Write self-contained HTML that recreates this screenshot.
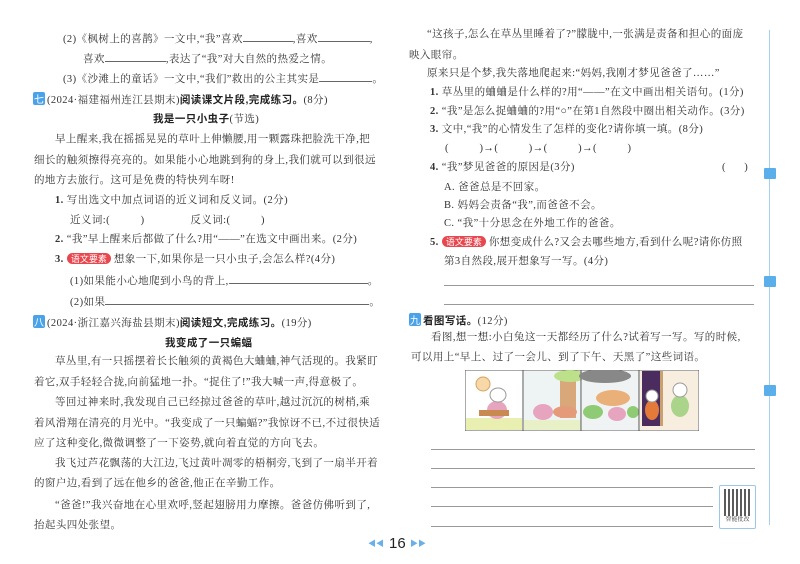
<!DOCTYPE html><html><head><meta charset="utf-8"><style>
body{margin:0;width:800px;height:564px;background:#fff;position:relative;overflow:hidden;font-family:"Liberation Serif","Noto Serif CJK SC",serif;color:#333;}
.l{position:absolute;font-size:10.5px;line-height:14px;white-space:nowrap;letter-spacing:0.43px}
.b{font-family:"Liberation Sans","Noto Sans CJK SC",sans-serif;font-weight:bold;color:#222}
.u{display:inline-block;border-bottom:1px solid #666;height:10px;vertical-align:baseline}
.bd{display:inline-block;width:12px;height:13px;background:#4aa3e8;color:#fff;text-align:center;font-size:10px;line-height:13px;border-radius:2px;margin-right:2px;font-family:"Noto Sans CJK SC",sans-serif;letter-spacing:0}
.rd{display:inline-block;background:#e8474f;color:#fff;font-size:9px;line-height:11px;padding:0 4px;border-radius:6px;margin-right:3px;font-family:"Noto Sans CJK SC",sans-serif;letter-spacing:0}
.hl{position:absolute;height:1px;background:#999}
</style></head><body>
<div class="l" style="top:31px;left:63px">(2)《枫树上的喜鹊》一文中,“我”喜欢<span class="u" style="width:50px"></span>,喜欢<span class="u" style="width:52px"></span>,</div>
<div class="l" style="top:51px;left:83px">喜欢<span class="u" style="width:61px"></span>,表达了“我”对大自然的热爱之情。</div>
<div class="l" style="top:71px;left:63px">(3)《沙滩上的童话》一文中,“我们”救出的公主其实是<span class="u" style="width:53px"></span>。</div>
<div class="l" style="top:92px;left:33px"><span class="bd">七</span>(2024·福建福州连江县期末)<span class="b">阅读课文片段,完成练习。</span>(8分)</div>
<div class="l" style="top:112px;left:153px"><span class="b">我是一只小虫子</span>(节选)</div>
<div class="l" style="top:133px;left:55px">早上醒来,我在摇摇晃晃的草叶上伸懒腰,用一颗露珠把脸洗干净,把</div>
<div class="l" style="top:154px;left:34px">细长的触须擦得亮亮的。如果能小心地跳到狗的身上,我们就可以到很远</div>
<div class="l" style="top:174px;left:34px">的地方去旅行。这可是免费的特快列车呀!</div>
<div class="l" style="top:194px;left:55px"><b>1.</b> 写出选文中加点词语的近义词和反义词。(2分)</div>
<div class="l" style="top:214px;left:70px">近义词:(&nbsp;&nbsp;&nbsp;&nbsp;&nbsp;&nbsp;&nbsp;&nbsp;&nbsp;&nbsp;)&nbsp;&nbsp;&nbsp;&nbsp;&nbsp;&nbsp;&nbsp;&nbsp;&nbsp;&nbsp;&nbsp;&nbsp;&nbsp;&nbsp;&nbsp;反义词:(&nbsp;&nbsp;&nbsp;&nbsp;&nbsp;&nbsp;&nbsp;&nbsp;&nbsp;&nbsp;)</div>
<div class="l" style="top:233px;left:55px"><b>2.</b> “我”早上醒来后都做了什么?用“——”在选文中画出来。(2分)</div>
<div class="l" style="top:253px;left:55px"><b>3.</b> <span class="rd">语文要素</span>想象一下,如果你是一只小虫子,会怎么样?(4分)</div>
<div class="l" style="top:273px;left:70px">(1)如果能小心地爬到小鸟的背上,<span class="u" style="width:139px"></span>。</div>
<div class="l" style="top:294px;left:70px">(2)如果<span class="u" style="width:264px"></span>。</div>
<div class="l" style="top:315px;left:33px"><span class="bd">八</span>(2024·浙江嘉兴海盐县期末)<span class="b">阅读短文,完成练习。</span>(19分)</div>
<div class="l" style="top:336px;left:165px"><span class="b">我变成了一只蝙蝠</span></div>
<div class="l" style="top:355px;left:55px">草丛里,有一只摇摆着长长触须的黄褐色大蛐蛐,神气活现的。我紧盯</div>
<div class="l" style="top:376px;left:34px">着它,双手轻轻合拢,向前猛地一扑。“捉住了!”我大喊一声,得意极了。</div>
<div class="l" style="top:396px;left:55px">等回过神来时,我发现自己已经掠过爸爸的草叶,越过沉沉的树梢,乘</div>
<div class="l" style="top:417px;left:34px">着风滑翔在清亮的月光中。“我变成了一只蝙蝠?”我惊讶不已,不过很快适</div>
<div class="l" style="top:437px;left:34px">应了这种变化,微微调整了一下姿势,就向着直觉的方向飞去。</div>
<div class="l" style="top:457px;left:55px">我飞过芦花飘荡的大江边,飞过黄叶凋零的梧桐旁,飞到了一扇半开着</div>
<div class="l" style="top:477px;left:34px">的窗户边,看到了远在他乡的爸爸,他正在辛勤工作。</div>
<div class="l" style="top:499px;left:55px">“爸爸!”我兴奋地在心里欢呼,竖起翅膀用力摩擦。爸爸仿佛听到了,</div>
<div class="l" style="top:519px;left:34px">抬起头四处张望。</div>

<div class="l" style="top:28px;left:427px">“这孩子,怎么在草丛里睡着了?”朦胧中,一张满是责备和担心的面庞</div>
<div class="l" style="top:49px;left:409px">映入眼帘。</div>
<div class="l" style="top:67px;left:427px">原来只是个梦,我失落地爬起来:“妈妈,我刚才梦见爸爸了……”</div>
<div class="l" style="top:86px;left:430px"><b>1.</b> 草丛里的蛐蛐是什么样的?用“——”在文中画出相关语句。(1分)</div>
<div class="l" style="top:105px;left:430px"><b>2.</b> “我”是怎么捉蛐蛐的?用“○”在第1自然段中圈出相关动作。(3分)</div>
<div class="l" style="top:123px;left:430px"><b>3.</b> 文中,“我”的心情发生了怎样的变化?请你填一填。(8分)</div>
<div class="l" style="top:142px;left:445px">(&nbsp;&nbsp;&nbsp;&nbsp;&nbsp;&nbsp;&nbsp;&nbsp;&nbsp;&nbsp;)→(&nbsp;&nbsp;&nbsp;&nbsp;&nbsp;&nbsp;&nbsp;&nbsp;&nbsp;&nbsp;)→(&nbsp;&nbsp;&nbsp;&nbsp;&nbsp;&nbsp;&nbsp;&nbsp;&nbsp;&nbsp;)→(&nbsp;&nbsp;&nbsp;&nbsp;&nbsp;&nbsp;&nbsp;&nbsp;&nbsp;&nbsp;)</div>
<div class="l" style="top:161px;left:430px"><b>4.</b> “我”梦见爸爸的原因是(3分)</div>
<div class="l" style="top:161px;left:722px">(&nbsp;&nbsp;&nbsp;&nbsp;&nbsp;&nbsp;)</div>
<div class="l" style="top:181px;left:444px">A. 爸爸总是不回家。</div>
<div class="l" style="top:199px;left:444px">B. 妈妈会责备“我”,而爸爸不会。</div>
<div class="l" style="top:217px;left:444px">C. “我”十分思念在外地工作的爸爸。</div>
<div class="l" style="top:236px;left:430px"><b>5.</b> <span class="rd">语文要素</span>你想变成什么?又会去哪些地方,看到什么呢?请你仿照</div>
<div class="l" style="top:255px;left:444px">第3自然段,展开想象写一写。(4分)</div>
<div class="hl" style="top:285px;left:444px;width:310px"></div>
<div class="hl" style="top:304px;left:444px;width:310px"></div>
<div class="l" style="top:313px;left:409px"><span class="bd">九</span><span class="b">看图写话。</span>(12分)</div>
<div class="l" style="top:331px;left:431px">看图,想一想:小白兔这一天都经历了什么?试着写一写。写的时候,</div>
<div class="l" style="top:351px;left:411px">可以用上“早上、过了一会儿、到了下午、天黑了”这些词语。</div>

<svg style="position:absolute;left:465px;top:370px" width="234" height="61" viewBox="0 0 234 61">
<rect x="0" y="0" width="234" height="61" fill="#fff" stroke="#555"/>
<rect x="1" y="48" width="56" height="12" fill="#e8efb0"/>
<circle cx="18" cy="14" r="7" fill="#f7d8a8" stroke="#d9a060"/>
<ellipse cx="32" cy="40" rx="10" ry="9" fill="#e7a4bf"/>
<ellipse cx="33" cy="25" rx="8" ry="7" fill="#fff" stroke="#999"/>
<rect x="14" y="40" width="30" height="6" fill="#c88a50"/>
<line x1="58" y1="0" x2="58" y2="61" stroke="#555"/>
<rect x="59" y="1" width="57" height="59" fill="#eef3f3"/>
<rect x="95" y="8" width="16" height="40" fill="#d9a87a"/>
<ellipse cx="105" cy="6" rx="16" ry="6" fill="#bde08a"/>
<ellipse cx="78" cy="42" rx="10" ry="8" fill="#e7a4bf"/>
<ellipse cx="100" cy="42" rx="12" ry="6" fill="#e59b7a"/>
<rect x="59" y="50" width="57" height="10" fill="#e8f0c8"/>
<line x1="116" y1="0" x2="116" y2="61" stroke="#555"/>
<rect x="117" y="1" width="57" height="59" fill="#f0f3f3"/>
<ellipse cx="140" cy="6" rx="26" ry="7" fill="#888"/>
<ellipse cx="148" cy="28" rx="17" ry="8" fill="#eab07a"/>
<ellipse cx="128" cy="42" rx="10" ry="7" fill="#8fca74"/>
<ellipse cx="152" cy="44" rx="9" ry="7" fill="#e7a4bf"/>
<ellipse cx="168" cy="42" rx="6" ry="6" fill="#8fca74"/>
<line x1="174" y1="0" x2="174" y2="61" stroke="#555"/>
<rect x="175" y="1" width="58" height="59" fill="#f8eee0"/>
<rect x="177" y="1" width="18" height="55" fill="#4a2d5e"/>
<rect x="195" y="1" width="3" height="55" fill="#c9a070"/>
<ellipse cx="187" cy="40" rx="7" ry="10" fill="#e37a3a"/>
<circle cx="187" cy="26" r="6" fill="#fff" stroke="#999"/>
<ellipse cx="215" cy="36" rx="9" ry="11" fill="#a9d48a"/>
<circle cx="215" cy="20" r="7" fill="#fff" stroke="#999"/>
</svg>

<div class="hl" style="top:449px;left:431px;width:324px"></div>
<div class="hl" style="top:468px;left:431px;width:324px"></div>
<div class="hl" style="top:487px;left:431px;width:282px"></div>
<div class="hl" style="top:506px;left:431px;width:282px"></div>
<div class="hl" style="top:526px;left:431px;width:282px"></div>
<div style="position:absolute;left:719px;top:485px;width:35px;height:42px;border:1px solid #9cc8e8;border-radius:2px;background:#fff">
<div style="margin:3px 0 0 4px;width:27px;height:27px;background:repeating-linear-gradient(90deg,#333 0 2px,#fff 2px 4px),#333;opacity:.8"></div>
<div style="font-size:6px;text-align:center;line-height:9px">智能批改</div></div>
<div style="position:absolute;left:769px;top:30px;width:1px;height:495px;background:#a8d0ee"></div>
<div style="position:absolute;left:764px;top:168px;width:12px;height:11px;background:#5aaeea;border-radius:1px"></div>
<div style="position:absolute;left:764px;top:276px;width:12px;height:11px;background:#5aaeea;border-radius:1px"></div>
<div style="position:absolute;left:764px;top:385px;width:12px;height:11px;background:#5aaeea;border-radius:1px"></div>
<div style="position:absolute;left:368px;top:538px;font-size:8px;color:#6ab0e8">◀◀</div>
<div style="position:absolute;left:389px;top:535px;font-size:15px;font-family:'Liberation Sans',sans-serif;color:#222">16</div>
<div style="position:absolute;left:410px;top:538px;font-size:8px;color:#6ab0e8">▶▶</div>
</body></html>
